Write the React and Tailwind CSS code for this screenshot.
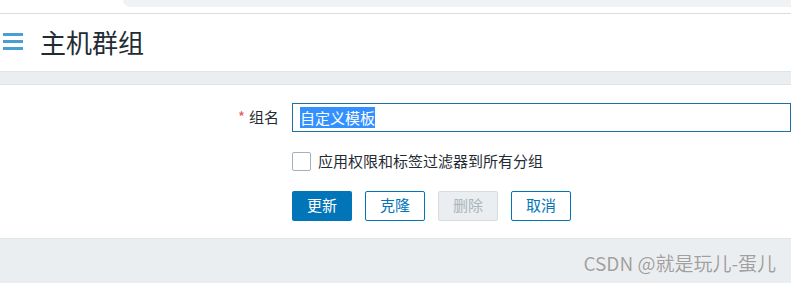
import React from "react";

const font = { fontFamily: '"Noto Sans CJK SC", "Noto Sans", sans-serif' };

export default function App() {
  return (
    <div className="w-[791px] h-[283px] overflow-hidden bg-white relative" style={font}>
      {/* browser strip */}
      <div className="h-[13px] flex">
        <div className="w-[123px] h-[7px] bg-white" />
        <div className="flex-1 h-[7px] bg-[#f0f2f4] rounded-bl-[8px]" />
      </div>
      <div className="h-px bg-[#dcdcdc]" />
      {/* header */}
      <div className="h-[57px] flex items-center">
        <div className="w-[20px] ml-[3px] flex flex-col gap-[4px] mt-[-2px]">
          <div className="h-[3px] bg-[#4a9ed6]" />
          <div className="h-[3px] bg-[#4a9ed6]" />
          <div className="h-[3px] bg-[#4a9ed6]" />
        </div>
        <div className="ml-[17px] text-[26px] leading-none text-[#1f2c33] mt-[-2px]">主机群组</div>
      </div>
      <div className="h-px bg-[#dfe4e7]" />
      <div className="h-[13px] bg-[#ebeef0] border-b border-[#dfe4e7]" />
      {/* form */}
      <div className="h-[153px] pt-[18px]">
        <div className="flex items-center h-[29px]">
          <div className="w-[280px] text-right text-[15px] text-[#1f2c33] pr-px">
            <span className="text-[#e45959] mr-[4px]">*</span>组名
          </div>
          <div className="ml-[12px] flex-1 h-[29px] border border-[#1f6fa3] flex items-center pl-[7px]">
            <span className="bg-[#3390ff] text-white text-[15px] leading-[21px]">自定义模板</span>
          </div>
        </div>
        <div className="flex items-center mt-[18px] ml-[292px]">
          <div className="w-[19px] h-[19px] border border-[#a3b1bc] rounded-[2px] bg-white" />
          <span className="ml-[7px] text-[15px] text-[#1f2c33]">应用权限和标签过滤器到所有分组</span>
        </div>
        <div className="flex ml-[292px] mt-[18px] gap-[13px]">
          <button className="w-[60px] h-[30px] rounded-[2px] bg-[#0275b8] text-white text-[15px]">更新</button>
          <button className="w-[60px] h-[30px] rounded-[2px] border border-[#0275b8] text-[#0275b8] text-[15px] bg-white">克隆</button>
          <button className="w-[60px] h-[30px] rounded-[2px] border border-[#d5dbdf] text-[#aab5bc] text-[15px] bg-[#ebeef0]">删除</button>
          <button className="w-[60px] h-[30px] rounded-[2px] border border-[#0275b8] text-[#0275b8] text-[15px] bg-white">取消</button>
        </div>
      </div>
      {/* footer */}
      <div className="h-[45px] bg-[#ebeef0] border-t border-[#dfe4e7] flex justify-end items-center pr-[15px]">
        <span className="text-[19px] text-[#a0a0a0] mt-[5px]" style={{ textShadow: "0 0 1px #fff" }}>CSDN @就是玩儿-蛋儿</span>
      </div>
    </div>
  );
}
